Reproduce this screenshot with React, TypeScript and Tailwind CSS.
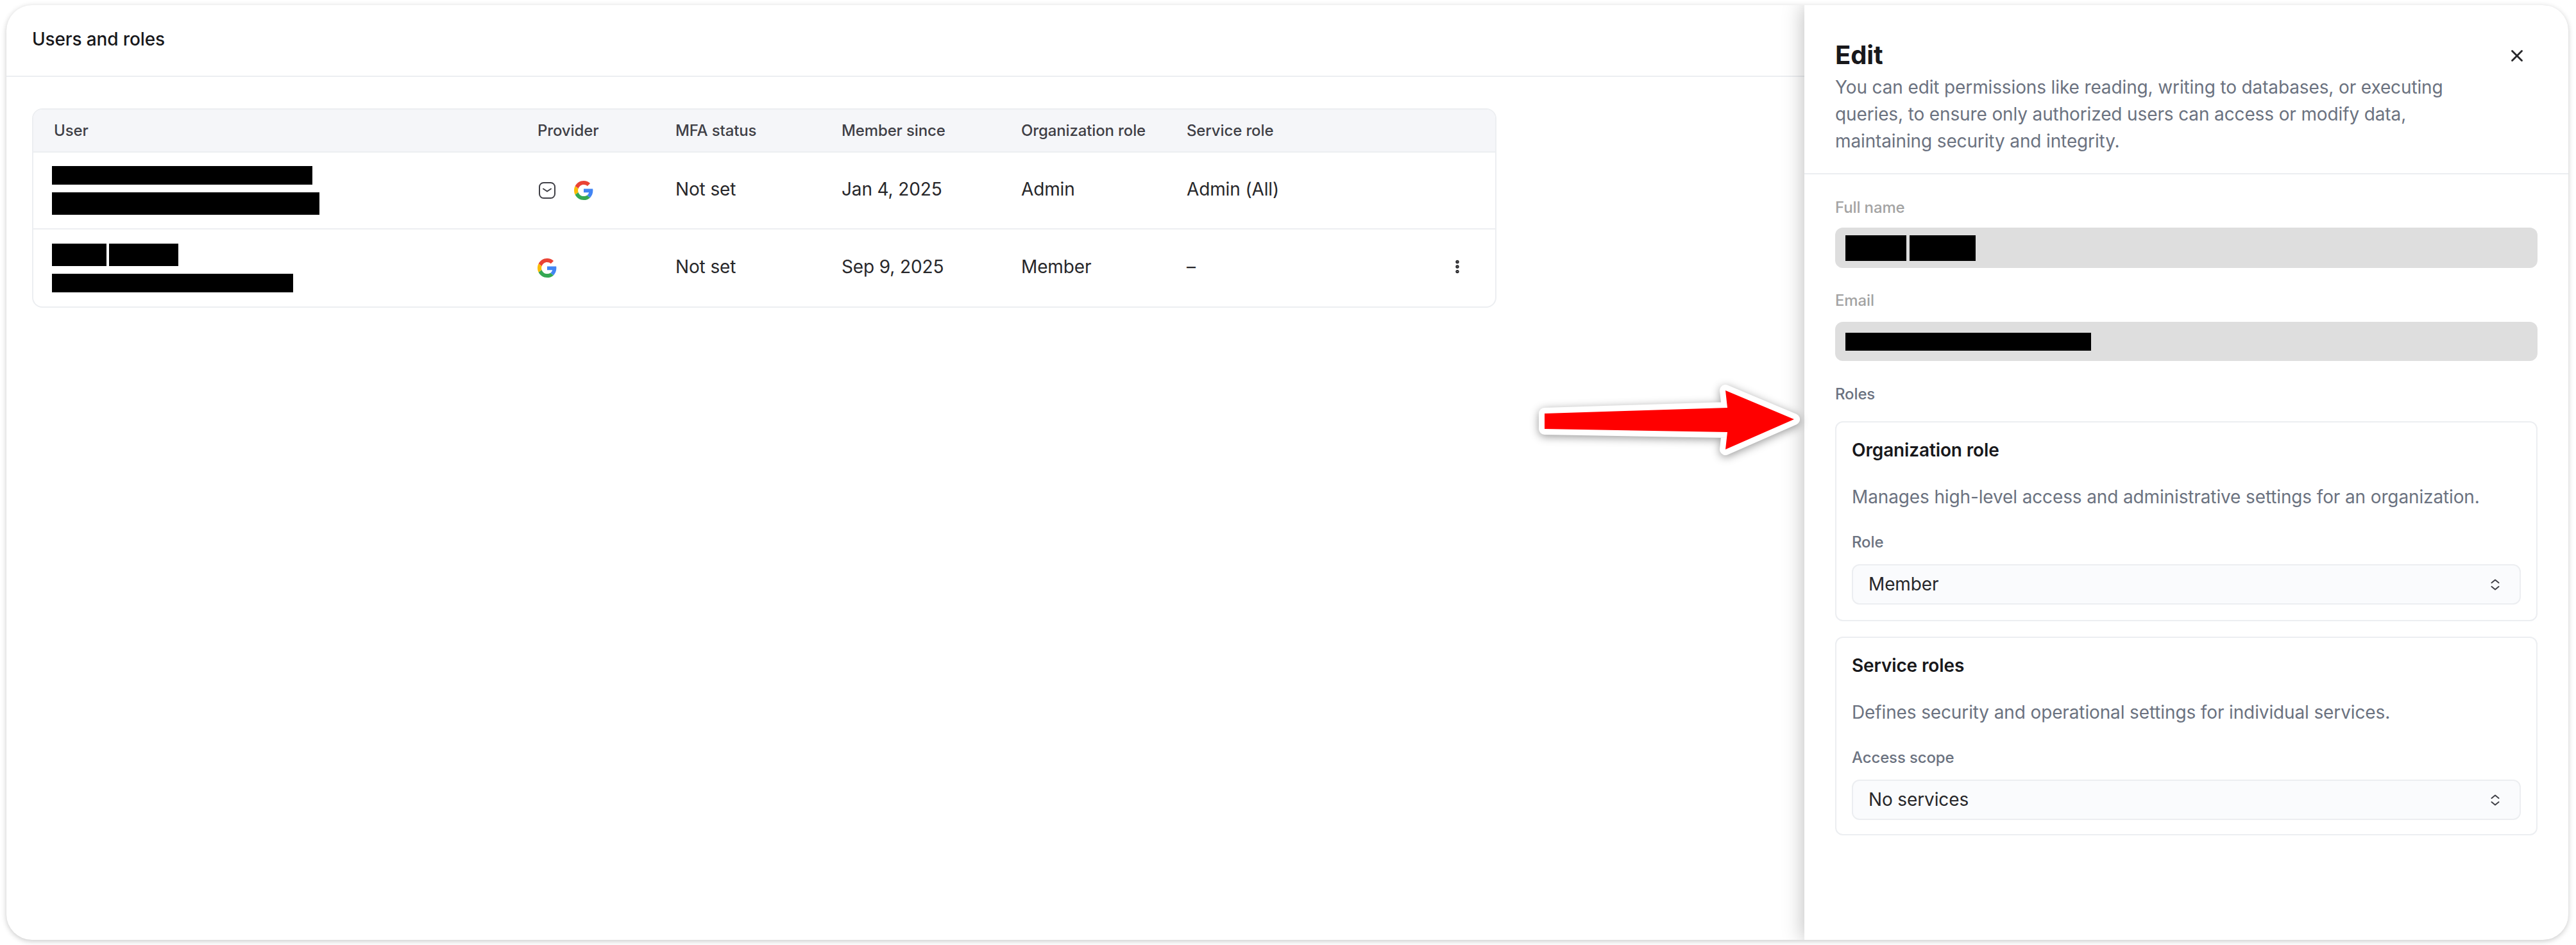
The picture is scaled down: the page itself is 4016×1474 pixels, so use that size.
import React from "react";
import { EllipsisVertical, X } from "lucide-react";

type Member = {
  name: number[];
  nameHeight: string;
  email: number;
  emailHeight: string;
  providers: ("mail" | "google")[];
  since: string;
  orgRole: string;
  serviceRole: string;
  menu?: boolean;
};

const members: Member[] = [
  {
    name: [406],
    nameHeight: "h-[29px]",
    email: 417,
    emailHeight: "h-[35px]",
    providers: ["mail", "google"],
    since: "Jan 4, 2025",
    orgRole: "Admin",
    serviceRole: "Admin (All)",
  },
  {
    name: [85, 108],
    nameHeight: "h-[35px]",
    email: 376,
    emailHeight: "h-[29px]",
    providers: ["google"],
    since: "Sep 9, 2025",
    orgRole: "Member",
    serviceRole: "–",
    menu: true,
  },
];

const columns = "grid grid-cols-[786px_215px_259px_280px_258px_1fr]";

const GoogleIcon = () => (
  <svg viewBox="0 0 48 48" className="h-[30px] w-[30px]">
    <path fill="#EA4335" d="M24 9.5c3.5 0 6.7 1.2 9.2 3.6l6.9-6.9C35.9 2.4 30.5 0 24 0 14.6 0 6.5 5.4 2.6 13.2l8 6.2C12.5 13.7 17.800 9.500 24 9.500z" />
    <path fill="#4285F4" d="M47 24.500c0-1.600-.1-3.100-.4-4.500H24v9h13c-.6 3-2.300 5.500-4.800 7.200l7.700 6C44.400 37.900 47 31.800 47 24.500z" />
    <path fill="#FBBC05" d="M10.500 28.600c-.5-1.400-.8-3-.8-4.600s.3-3.200.8-4.600l-8-6.200C.9 16.500 0 20.100 0 24s.9 7.500 2.600 10.800l7.900-6.200z" />
    <path fill="#34A853" d="M24 48c6.500 0 11.900-2.100 15.900-5.800l-7.700-6c-2.100 1.400-4.900 2.300-8.200 2.300-6.200 0-11.500-4.200-13.400-9.900l-8 6.200C6.500 42.600 14.600 48 24 48z" />
  </svg>
);

const MailIcon = () => (
  <svg viewBox="0 0 26 26" fill="none" className="h-[26px] w-[26px]">
    <rect x="1" y="1" width="24" height="24" rx="6.500" stroke="#3f3f46" strokeWidth="2" />
    <path d="M7 10.500 13 14.500 19 10.500" stroke="#3f3f46" strokeWidth="2" strokeLinecap="round" strokeLinejoin="round" />
  </svg>
);

const SelectChevrons = () => (
  <svg viewBox="0 0 14 20" fill="none" className="h-[20px] w-[14px]">
    <path d="M1.500 7 7 2.500 12.500 7" stroke="#3f3f46" strokeWidth="2" strokeLinecap="round" strokeLinejoin="round" />
    <path d="M1.500 13 7 17.500 12.500 13" stroke="#3f3f46" strokeWidth="2" strokeLinecap="round" strokeLinejoin="round" />
  </svg>
);

const RoleCard = ({
  title,
  description,
  label,
  value,
  className,
}: {
  title: string;
  description: string;
  label: string;
  value: string;
  className: string;
}) => (
  <div className={`rounded-xl border-2 border-[#eceef1] px-[24px] pt-[25px] ${className}`}>
    <h3 className="text-[28px] leading-[36px] font-semibold text-[#18181b]">{title}</h3>
    <p className="mt-[37px] text-[28px] leading-[36px] text-[#6b7280]">{description}</p>
    <p className="mt-[37px] text-[24px] leading-[32px] font-medium text-[#6b7280]">{label}</p>
    <div className="mt-[18px] flex h-[63px] items-center justify-between rounded-xl border-2 border-[#eceef1] bg-[#fafbfd] pr-[31px] pl-[24px]">
      <span className="pb-[2px] text-[28px] leading-[36px] text-[#27272a]">{value}</span>
      <SelectChevrons />
    </div>
  </div>
);

export default function App() {
  return (
    <div className="relative h-[1474px] w-[4016px] bg-white pt-[8px] pr-[12px] pl-[10px] font-['Inter',sans-serif] tracking-[-0.13px]">
      <div className="flex h-[1458px] overflow-hidden rounded-[40px] bg-white shadow-[0_2px_8px_rgba(0,0,0,0.22)]">
        <main className="flex-1">
          <div className="flex h-[112px] items-center border-b-2 border-[#eceef1] pb-[4px] pl-[40px]">
            <h1 className="text-[28px] leading-[36px] font-medium text-[#18181b]">Users and roles</h1>
          </div>

          <div className="mt-[49px] ml-[40px] w-[2283px] overflow-hidden rounded-2xl border-2 border-[#eceef1] text-[#27272a]">
            <div className={`${columns} h-[67px] items-center border-b-2 border-[#eceef1] bg-[#f5f6f9] text-[24px] leading-[32px] font-medium text-[#3f3f46]`}>
              <span className="pl-[32px]">User</span>
              <span>Provider</span>
              <span>MFA status</span>
              <span>Member since</span>
              <span>Organization role</span>
              <span>Service role</span>
            </div>

            {members.map((member, i) => (
              <div
                key={member.since}
                className={`${columns} h-[120px] items-center text-[28px] leading-[36px] ${i === 0 ? "border-b-2 border-[#eceef1]" : ""}`}
              >
                <div className="flex flex-col gap-[12px] pl-[29px]">
                  <div className="flex gap-[4px]">
                    {member.name.map((w) => (
                      <div key={w} className={`bg-black ${member.nameHeight}`} style={{ width: w }} />
                    ))}
                  </div>
                  <div className={`bg-black ${member.emailHeight}`} style={{ width: member.email }} />
                </div>
                <div className="flex items-center gap-[27px]">
                  {member.providers.map((p) => (
                    <div key={p} className="flex w-[30px] justify-center">
                      {p === "mail" ? <MailIcon /> : <GoogleIcon />}
                    </div>
                  ))}
                </div>
                <span className="pb-[4px]">Not set</span>
                <span className="pb-[4px]">{member.since}</span>
                <span className="pb-[4px]">{member.orgRole}</span>
                <div className="flex items-center justify-between pr-[46px] pb-[4px]">
                  <span>{member.serviceRole}</span>
                  {member.menu && <EllipsisVertical className="h-[26px] w-[26px] text-[#27272a]" strokeWidth={3} />}
                </div>
              </div>
            ))}
          </div>
        </main>

        <aside className="z-10 w-[1191px] shrink-0 bg-white shadow-[-2px_0_30px_rgba(0,0,0,0.25)]">
          <div className="relative h-[264px] border-b-2 border-[#eceef1] px-[48px] pt-[54px]">
            <h2 className="text-[40px] leading-[48px] font-bold text-[#18181b]">Edit</h2>
            <X className="absolute top-[64px] right-[65px] h-[30px] w-[30px] text-[#27272a]" strokeWidth={2.250} />
            <p className="mt-[5px] w-[1040px] text-[28px] leading-[42px] text-[#6b7280]">
              You can edit permissions like reading, writing to databases, or executing queries, to ensure only
              authorized users can access or modify data, maintaining security and integrity.
            </p>
          </div>

          <div className="px-[48px] pt-[36px]">
            <p className="text-[24px] leading-[32px] font-medium text-[#a3a3a3]">Full name</p>
            <div className="mt-[15px] flex h-[63px] items-center gap-[5px] rounded-xl bg-[#dedede] pl-[16px]">
              <div className="h-[40px] w-[95px] bg-black" />
              <div className="h-[40px] w-[103px] bg-black" />
            </div>

            <p className="mt-[35px] text-[24px] leading-[32px] font-medium text-[#a3a3a3]">Email</p>
            <div className="mt-[17px] flex h-[61px] items-center rounded-xl bg-[#dedede] pl-[16px]">
              <div className="h-[28px] w-[383px] bg-black" />
            </div>

            <p className="mt-[36px] text-[24px] leading-[32px] font-medium text-[#6b7280]">Roles</p>
            <RoleCard
              className="mt-[26px] h-[312px]"
              title="Organization role"
              description="Manages high-level access and administrative settings for an organization."
              label="Role"
              value="Member"
            />
            <RoleCard
              className="mt-[24px] h-[310px]"
              title="Service roles"
              description="Defines security and operational settings for individual services."
              label="Access scope"
              value="No services"
            />
          </div>
        </aside>
      </div>

      {/* annotation arrow pasted over the screenshot */}
      <svg
        viewBox="0 0 450 150"
        className="absolute top-[580px] left-[2380px] z-20 h-[150px] w-[450px] drop-shadow-[0_3px_7px_rgba(0,0,0,0.4)]"
      >
        <polygon
          points="28,65 313,56 310,29 417,74 310,121 313,94 28,89"
          fill="#ff0000"
          stroke="#ffffff"
          strokeWidth="18"
          strokeLinejoin="round"
          paintOrder="stroke"
        />
      </svg>
    </div>
  );
}
